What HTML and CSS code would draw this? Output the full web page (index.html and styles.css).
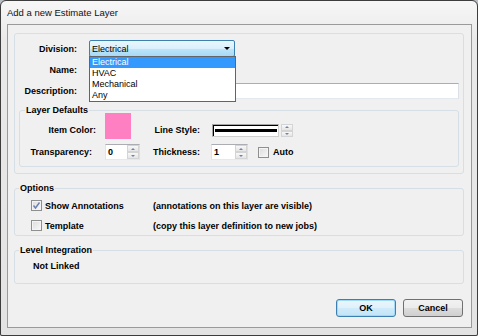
FILE: index.html
```html
<!DOCTYPE html>
<html lang="en">
<head>
    <meta charset="UTF-8">
    <title>Add a new Estimate Layer</title>
    <link rel="stylesheet" href="styles.css">
</head>
<body>

    <div class="window">
        <div class="titlebar">Add a new Estimate Layer</div>

        <div class="client">
            <fieldset class="group main">
                <div class="row row-division">
                    <label class="lbl">Division:</label>
                    <div class="combo">
                        <span class="combo-text">Electrical</span>
                        <span class="combo-arrow"></span>
                        <ul class="dropdown">
                            <li class="selected">Electrical</li>
                            <li>HVAC</li>
                            <li>Mechanical</li>
                            <li>Any</li>
                        </ul>
                    </div>
                </div>
                <div class="row row-name">
                    <label class="lbl">Name:</label>
                    <div class="textbox name-box"></div>
                </div>
                <div class="row row-desc">
                    <label class="lbl">Description:</label>
                    <div class="textbox desc-box"></div>
                </div>

                <fieldset class="group defaults">
                    <legend>Layer Defaults</legend>
                    <div class="defaults-grid">
                        <label class="dlbl top">Item Color:</label>
                        <div class="swatch"></div>
                        <label class="dlbl top lbl-right">Line Style:</label>
                        <div class="linestyle">
                            <div class="line-box"><div class="line"></div></div>
                            <div class="spin"><span class="up"></span><span class="down"></span></div>
                        </div>

                        <label class="dlbl lbl-transp">Transparency:</label>
                        <div class="textbox numeric transp">
                            <span class="val">0</span>
                            <div class="spin"><span class="up"></span><span class="down"></span></div>
                        </div>
                        <label class="dlbl lbl-right">Thickness:</label>
                        <div class="thick-row">
                            <div class="textbox numeric thick">
                                <span class="val">1</span>
                                <div class="spin"><span class="up"></span><span class="down"></span></div>
                            </div>
                            <span class="check"></span>
                            <span class="auto">Auto</span>
                        </div>
                    </div>
                </fieldset>
            </fieldset>

            <fieldset class="group options">
                <legend>Options</legend>
                <div class="opt-row first">
                    <span class="check checked">
                        <svg width="9" height="9" viewBox="0 0 9 9"><polyline points="1.5,4.5 3.5,7 7.5,1.5" fill="none" stroke="#6a7fb4" stroke-width="1.4"/></svg>
                    </span>
                    <span class="opt-name">Show Annotations</span>
                    <span>(annotations on this layer are visible)</span>
                </div>
                <div class="opt-row second">
                    <span class="check"></span>
                    <span class="opt-name">Template</span>
                    <span>(copy this layer definition to new jobs)</span>
                </div>
            </fieldset>

            <fieldset class="group level">
                <legend>Level Integration</legend>
                <div class="linked">Not Linked</div>
            </fieldset>

            <div class="buttons">
                <button class="btn btn-ok">OK</button>
                <button class="btn">Cancel</button>
            </div>
        </div>
    </div>

</body>
</html>
```

FILE: styles.css
```css
/* Reset */
* {
    box-sizing: border-box;
}

body {
    margin: 0;
    font-family: "Liberation Sans", Arial, sans-serif;
    font-size: 9px;
    color: #000;
    background: #b9bec4;
}

/* Window frame */
.window {
    width: 478px;
    height: 336px;
    border: 1px solid #3d3d3d;
    border-radius: 6px 6px 2px 2px;
    background: linear-gradient(#f7f7f7, #e9e9e9 40px, #e3e3e3);
    display: flex;
    flex-direction: column;
}

.titlebar {
    height: 23px;
    line-height: 23px;
    padding-left: 6px;
    font-size: 9.5px;
    color: #111;
}

.client {
    margin: 0 5px 0 6px;
    height: 304px;
    border: 1px solid #9a9a9a;
    background: #f0f0f0;
    padding: 8px 7px 0 6px;
}

/* Group boxes */
.group {
    margin: 0;
    padding: 0;
    border: 1px solid #d5dfe5;
    border-radius: 3px;
    min-width: 0;
}

.group legend {
    padding: 0 1px;
    margin-left: 4px;
    line-height: 11px;
    font-weight: bold;
}

.main {
    padding: 6px 0 6px 0;
}

.row {
    display: flex;
    align-items: center;
}

.lbl {
    width: 62px;
    margin-right: 12px;
    text-align: right;
    font-weight: bold;
}

.row-division {
    height: 17px;
}

.row-name {
    height: 17px;
    margin-top: 4px;
}

.row-desc {
    height: 16px;
    margin-top: 5px;
}

.textbox {
    background: #fff;
    border: 1px solid #e3e9ef;
    border-top-color: #abadb3;
    border-left-color: #e2e3ea;
    border-right-color: #dbdfe6;
}

.name-box {
    width: 146px;
    height: 17px;
}

.desc-box {
    width: 370px;
    height: 16px;
}

/* Combo box */
.combo {
    position: relative;
    width: 146px;
    height: 17px;
    border: 1px solid #3c7fb1;
    border-radius: 2px;
    background: linear-gradient(#eaf6fd 0%, #d9f0fc 50%, #bee6fd 50%, #a7d9f5 100%);
    display: flex;
    align-items: center;
}

.combo-text {
    flex: 1;
    padding-left: 2px;
}

.combo-arrow {
    width: 0;
    height: 0;
    margin-right: 4px;
    border-left: 3px solid transparent;
    border-right: 3px solid transparent;
    border-top: 3px solid #000;
}

.dropdown {
    position: absolute;
    top: 15px;
    left: -1px;
    width: 147px;
    margin: 0;
    padding: 0;
    list-style: none;
    background: #fff;
    border: 1px solid #646464;
    z-index: 2;
}

.dropdown li {
    line-height: 11px;
    padding-left: 2px;
}

.dropdown .selected {
    background: #3399ff;
    color: #fff;
}

/* Layer defaults */
.defaults {
    margin: 6px 4px 0;
    padding: 0 0 6px;
}

.defaults legend {
    margin-left: 5px;
}

.defaults-grid {
    display: grid;
    grid-template-columns: 85px 35px 71px auto;
    grid-template-rows: 26px 16px;
    row-gap: 5px;
    margin-top: -3px;
    align-items: center;
}

.dlbl {
    font-weight: bold;
    text-align: right;
    padding-right: 9px;
    line-height: 13px;
}

.dlbl.top {
    align-self: end;
    margin-bottom: 2px;
}

.lbl-right {
    padding-right: 11px;
}

.lbl-transp {
    padding-right: 13px;
}

.swatch {
    width: 26px;
    height: 26px;
    background: #ff80c2;
}

.linestyle {
    display: flex;
    gap: 2px;
    align-self: end;
    margin: 0 0 2px 1px;
    height: 13px;
}

.line-box {
    width: 67px;
    background: #fff;
    border: 1px solid #a5a5a5;
    border-right-color: #d0d0d0;
    border-bottom-color: #d0d0d0;
    box-shadow: inset 1px 1px 0 #000;
    padding: 4px 1px 0 2px;
}

.line {
    height: 3px;
    background: #000;
}

.numeric {
    display: flex;
    height: 16px;
}

.transp {
    width: 35px;
}

.thick {
    width: 37px;
}

.val {
    flex: 1;
    padding-left: 2px;
    line-height: 14px;
    font-weight: bold;
}

/* Spin buttons */
.spin {
    width: 12px;
    display: flex;
    flex-direction: column;
}

.spin span {
    flex: 1;
    display: flex;
    align-items: center;
    justify-content: center;
    border: 1px solid #d4d4d4;
    background: linear-gradient(#f8f8f8, #e5e5e5);
}

.spin .up::after {
    content: "";
    border-left: 2px solid transparent;
    border-right: 2px solid transparent;
    border-bottom: 2px solid #6f82ad;
}

.spin .down::after {
    content: "";
    border-left: 2px solid transparent;
    border-right: 2px solid transparent;
    border-top: 2px solid #6f82ad;
}

.thick-row {
    display: flex;
    align-items: center;
}

/* Check boxes */
.check {
    width: 11px;
    height: 11px;
    border: 1px solid #8e8f8f;
    background: linear-gradient(135deg, #dcdcdc, #f8f8f8);
    box-shadow: inset 0 0 0 1px #f4f4f4;
    display: flex;
    align-items: center;
    justify-content: center;
}

.thick-row .check {
    margin-left: 10px;
}

.auto {
    margin-left: 4px;
    font-weight: bold;
}

/* Options */
.options {
    margin-top: 9px;
    padding: 0 0 3px;
}

.opt-row {
    display: flex;
    align-items: center;
    height: 13px;
    padding-left: 16px;
    font-weight: bold;
}

.opt-row.first {
    margin-top: 5px;
}

.opt-row.second {
    margin-top: 7px;
}

.opt-name {
    width: 108px;
    margin-left: 3px;
}

/* Level integration */
.level {
    margin-top: 9px;
    padding: 5px 0 11px;
}

.linked {
    padding-left: 18px;
    line-height: 11px;
    font-weight: bold;
}

/* Buttons */
.buttons {
    display: flex;
    justify-content: flex-end;
    gap: 7px;
    margin-top: 15px;
    padding-right: 1px;
}

.btn {
    width: 60px;
    height: 18px;
    padding: 0;
    font-family: inherit;
    font-size: 9px;
    font-weight: bold;
    color: #000;
    border: 1px solid #707070;
    border-radius: 3px;
    background: linear-gradient(#f2f2f2 0%, #ebebeb 50%, #dddddd 50%, #cfcfcf 100%);
}

.btn-ok {
    border-color: #3c7fb1;
    background: linear-gradient(#eaf6fd 0%, #e0f1fb 50%, #d0ebfa 50%, #c2e4f7 100%);
    box-shadow: inset 0 0 0 1px #9fd9f7;
}
```
